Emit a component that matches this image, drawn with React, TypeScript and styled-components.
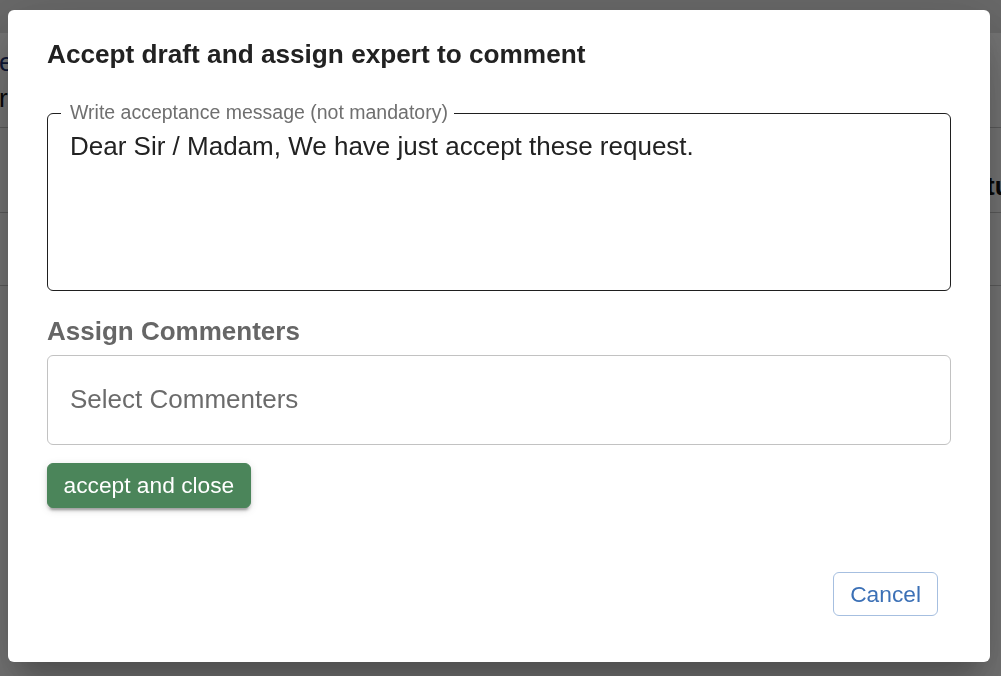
import styled, { createGlobalStyle } from "styled-components";

const GlobalStyle = createGlobalStyle`
  html, body {
    margin: 0;
    padding: 0;
    height: 100%;
    overflow: hidden;
  }
  body {
    font-family: "Liberation Sans", Arial, sans-serif;
  }
  * {
    box-sizing: border-box;
  }
`;

/* page behind the dialog */
const Page = styled.div`
  width: 100%;
  height: 676px;
  background: #fff;
  overflow: hidden;
  font-size: 26px;
  color: #111;
`;

const TopBar = styled.div`
  height: 33px;
  background: #e4e4e4;
`;

const Intro = styled.div`
  height: 94px;
  padding-top: 11px;
  display: flex;
  flex-direction: column;
  line-height: 36px;
`;

const IntroLine = styled.div<{ $link?: boolean }>`
  margin-left: -1px;
  color: ${(p) => (p.$link ? "#1b2f72" : "#111")};
`;

const TableRow = styled.div<{ $h: number }>`
  height: ${(p) => p.$h}px;
  border-top: 1px solid #c8c8c8;
  display: flex;
  justify-content: flex-end;
  align-items: center;
`;

const ColumnHead = styled.span`
  font-weight: 700;
  margin-right: -24px;
  padding-top: 32px;
`;

/* dialog */
const Overlay = styled.div`
  position: fixed;
  inset: 0;
  background: rgba(0, 0, 0, 0.54);
  padding: 10px 0 0 8px;
`;

const Dialog = styled.div`
  width: 982px;
  height: 652px;
  background: #fff;
  border-radius: 6px;
  padding: 0 39px 46px;
  display: flex;
  flex-direction: column;
  box-shadow: 0 18px 24px -11px rgba(0, 0, 0, 0.2),
    0 39px 62px 5px rgba(0, 0, 0, 0.14), 0 15px 75px 13px rgba(0, 0, 0, 0.12);
`;

const Title = styled.h2`
  margin: 0;
  padding-top: 24px;
  font-size: 26.2px;
  line-height: 41.6px;
  font-weight: 700;
  color: #222;
`;

const Field = styled.fieldset`
  margin: 25px 0 0;
  padding: 0 13px;
  min-width: 0;
  border: 1px solid #1f1f1f;
  border-radius: 6px;
`;

const Legend = styled.legend`
  padding: 0 6px 4px 9px;
  font-size: 19.5px;
  line-height: 22px;
  color: #6f6f6f;
`;

const MessageInput = styled.textarea`
  display: block;
  width: 100%;
  height: 162px;
  margin-top: 1px;
  padding: 0 9px;
  border: none;
  outline: none;
  resize: none;
  overflow: hidden;
  background: transparent;
  font-family: "Liberation Sans", Arial, sans-serif;
  font-size: 26px;
  line-height: 37.4px;
  color: #222;
`;

const SectionLabel = styled.div`
  margin-top: 25px;
  font-size: 26px;
  line-height: 30px;
  font-weight: 700;
  color: #666;
`;

const SelectBox = styled.div`
  margin-top: 9px;
  height: 90px;
  padding: 0 22px;
  display: flex;
  align-items: center;
  border: 1px solid #c2c2c2;
  border-radius: 6px;
  font-size: 26px;
  color: #6b6b6b;
  cursor: pointer;
`;

const Button = styled.button<{ $variant: "contained" | "outlined" }>`
  height: ${(p) => (p.$variant === "contained" ? 45 : 44)}px;
  padding: 0 ${(p) => (p.$variant === "contained" ? 15.5 : 16)}px;
  border-radius: 6px;
  font-family: "Liberation Sans", Arial, sans-serif;
  font-size: 22.75px;
  cursor: pointer;
  border: 1px solid
    ${(p) => (p.$variant === "contained" ? "#4b855a" : "#a6bfe0")};
  background: ${(p) => (p.$variant === "contained" ? "#4b855a" : "#fff")};
  color: ${(p) => (p.$variant === "contained" ? "#fff" : "#3b70b6")};
  box-shadow: ${(p) =>
    p.$variant === "contained"
      ? "0 5px 2px -3px rgba(0,0,0,0.2), 0 3px 3px 0 rgba(0,0,0,0.14), 0 2px 8px 0 rgba(0,0,0,0.12)"
      : "none"};
`;

const PrimaryRow = styled.div`
  margin-top: 18px;
  display: flex;
`;

const Footer = styled.div`
  margin-top: auto;
  padding-right: 13px;
  display: flex;
  justify-content: flex-end;
`;

export default function App() {
  return (
    <>
      <GlobalStyle />
      <Page>
        <TopBar />
        <Intro>
          <IntroLine $link>e</IntroLine>
          <IntroLine>r</IntroLine>
        </Intro>
        <TableRow $h={85}>
          <ColumnHead>Status</ColumnHead>
        </TableRow>
        <TableRow $h={73} />
        <TableRow $h={60} />
      </Page>
      <Overlay>
        <Dialog role="dialog">
          <Title>Accept draft and assign expert to comment</Title>
          <Field>
            <Legend>Write acceptance message (not mandatory)</Legend>
            <MessageInput defaultValue="Dear Sir / Madam, We have just accept these request." />
          </Field>
          <SectionLabel>Assign Commenters</SectionLabel>
          <SelectBox>Select Commenters</SelectBox>
          <PrimaryRow>
            <Button $variant="contained">accept and close</Button>
          </PrimaryRow>
          <Footer>
            <Button $variant="outlined">Cancel</Button>
          </Footer>
        </Dialog>
      </Overlay>
    </>
  );
}
